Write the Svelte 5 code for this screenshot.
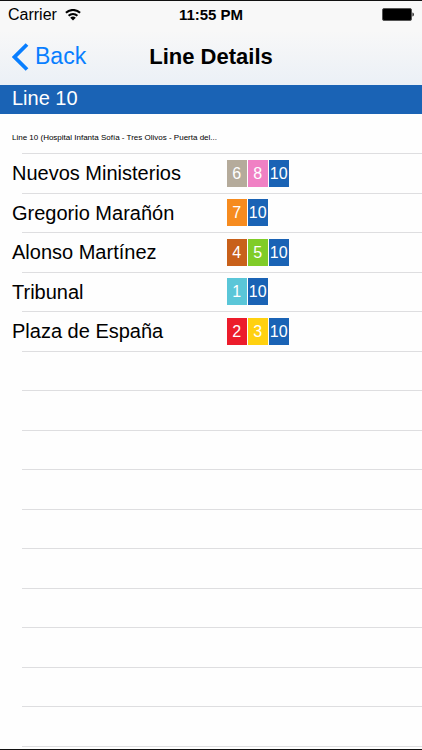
<script lang="ts">
    type Stop = { name: string; lines: number[] };

    const lineColors: Record<number, string> = {
        1: '#5ac6d8',
        2: '#ec1c2b',
        3: '#ffd110',
        4: '#c8601a',
        5: '#80cc28',
        6: '#b5ab9b',
        7: '#f68b1f',
        8: '#f080c4',
        10: '#1a63b5'
    };

    const stops: Stop[] = [
        { name: 'Nuevos Ministerios', lines: [6, 8, 10] },
        { name: 'Gregorio Marañón', lines: [7, 10] },
        { name: 'Alonso Martínez', lines: [4, 5, 10] },
        { name: 'Tribunal', lines: [1, 10] },
        { name: 'Plaza de España', lines: [2, 3, 10] }
    ];

    // blank rows fill the rest of the table
    const emptyRows = Array.from({ length: 10 });
</script>

<div class="screen">
    <header class="top">
        <div class="status-bar">
            <div class="carrier">
                <span>Carrier</span>
                <svg width="16" height="12" viewBox="0 0 16 12" aria-hidden="true">
                    <path d="M0.9 3.8a10.2 10.2 0 0 1 14.2 0" fill="none" stroke="#000" stroke-width="2" />
                    <path d="M3.6 6.7a6.3 6.3 0 0 1 8.8 0" fill="none" stroke="#000" stroke-width="2" />
                    <path d="M8 11.4L5.2 8.8a4 4 0 0 1 5.6 0z" fill="#000" />
                </svg>
            </div>
            <span class="time">11:55 PM</span>
            <svg class="battery" width="32" height="13" viewBox="0 0 32 13" aria-hidden="true">
                <rect x="0.5" y="0.5" width="29" height="12" rx="1.5" fill="#000" stroke="#555" />
                <path d="M30.5 4.5c1.7 0.6 1.7 3.4 0 4z" fill="#000" />
            </svg>
        </div>
        <nav class="nav-bar">
            <a class="back" href="#back">
                <svg width="17" height="28" viewBox="0 0 17 28" aria-hidden="true">
                    <path d="M15 1.5L2.5 14L15 26.5" fill="none" stroke="#087eff" stroke-width="3.8" />
                </svg>
                <span>Back</span>
            </a>
            <h1>Line Details</h1>
        </nav>
    </header>

    <main>
        <h2>Line 10</h2>
        <p class="description">Line 10 (Hospital Infanta Sofía - Tres Olivos - Puerta del...</p>
        <ul class="stops">
            {#each stops as stop}
                <li>
                    <span class="name">{stop.name}</span>
                    <span class="badges">
                        {#each stop.lines as line}
                            <span class="badge" style="background: {lineColors[line]}">{line}</span>
                        {/each}
                    </span>
                </li>
            {/each}
            {#each emptyRows as _}
                <li></li>
            {/each}
        </ul>
    </main>
</div>

<style>
    :global(body) {
        background: #fefefe;
    }
    .screen {
        box-sizing: border-box;
        min-height: 100vh;
        border-top: 1px solid #111;
        border-bottom: 1px solid #111;
        background: #fefefe;
        color: #000;
        font-family: "Liberation Sans", Arial, sans-serif;
    }
    .top {
        background: linear-gradient(#f8f8f8 35%, #ebf0f6);
    }
    .status-bar {
        display: grid;
        grid-template-columns: 1fr auto 1fr;
        align-items: center;
        height: 27px;
        padding: 0 8px;
        font-size: 16px;
    }
    .carrier {
        display: flex;
        align-items: center;
        gap: 8px;
    }
    .time {
        font-size: 15px;
        font-weight: 700;
    }
    .battery {
        justify-self: end;
    }
    .nav-bar {
        display: grid;
        grid-template-columns: 1fr auto 1fr;
        align-items: center;
        height: 57px;
        padding: 0 12px;
    }
    .back {
        display: flex;
        align-items: center;
        gap: 6px;
        color: #087eff;
        font-size: 23px;
        text-decoration: none;
    }
    h1 {
        margin: 0;
        font-size: 22px;
        font-weight: 700;
    }
    h2 {
        height: 29px;
        margin: 0;
        padding: 0 12px;
        background: #1a63b5;
        color: #fff;
        font-size: 20px;
        font-weight: 400;
        line-height: 26px;
    }
    .description {
        margin: 0;
        padding: 0 12px;
        font-size: 8px;
        line-height: 48px;
        height: 39px;
    }
    .stops {
        margin: 0;
        padding: 0;
        list-style: none;
    }
    .stops li {
        display: grid;
        grid-template-columns: 11fr 10fr;
        align-items: center;
        box-sizing: border-box;
        height: 40px;
        padding: 0 0 0 12px;
        /* separator is inset from the left edge */
        background: linear-gradient(#dedee0, #dedee0) 22px 0 / 100% 1px no-repeat;
    }
    .stops li:nth-child(even) {
        height: 39px;
    }
    /* closing separator under the last row */
    .stops::after {
        content: "";
        display: block;
        height: 1px;
        margin-left: 22px;
        background: #dedee0;
    }
    .name {
        font-size: 20px;
        line-height: 24px;
    }
    .badges {
        display: flex;
        gap: 1px;
    }
    .badge {
        width: 20px;
        color: #fff;
        font-size: 16px;
        line-height: 27px;
        text-align: center;
    }
</style>
